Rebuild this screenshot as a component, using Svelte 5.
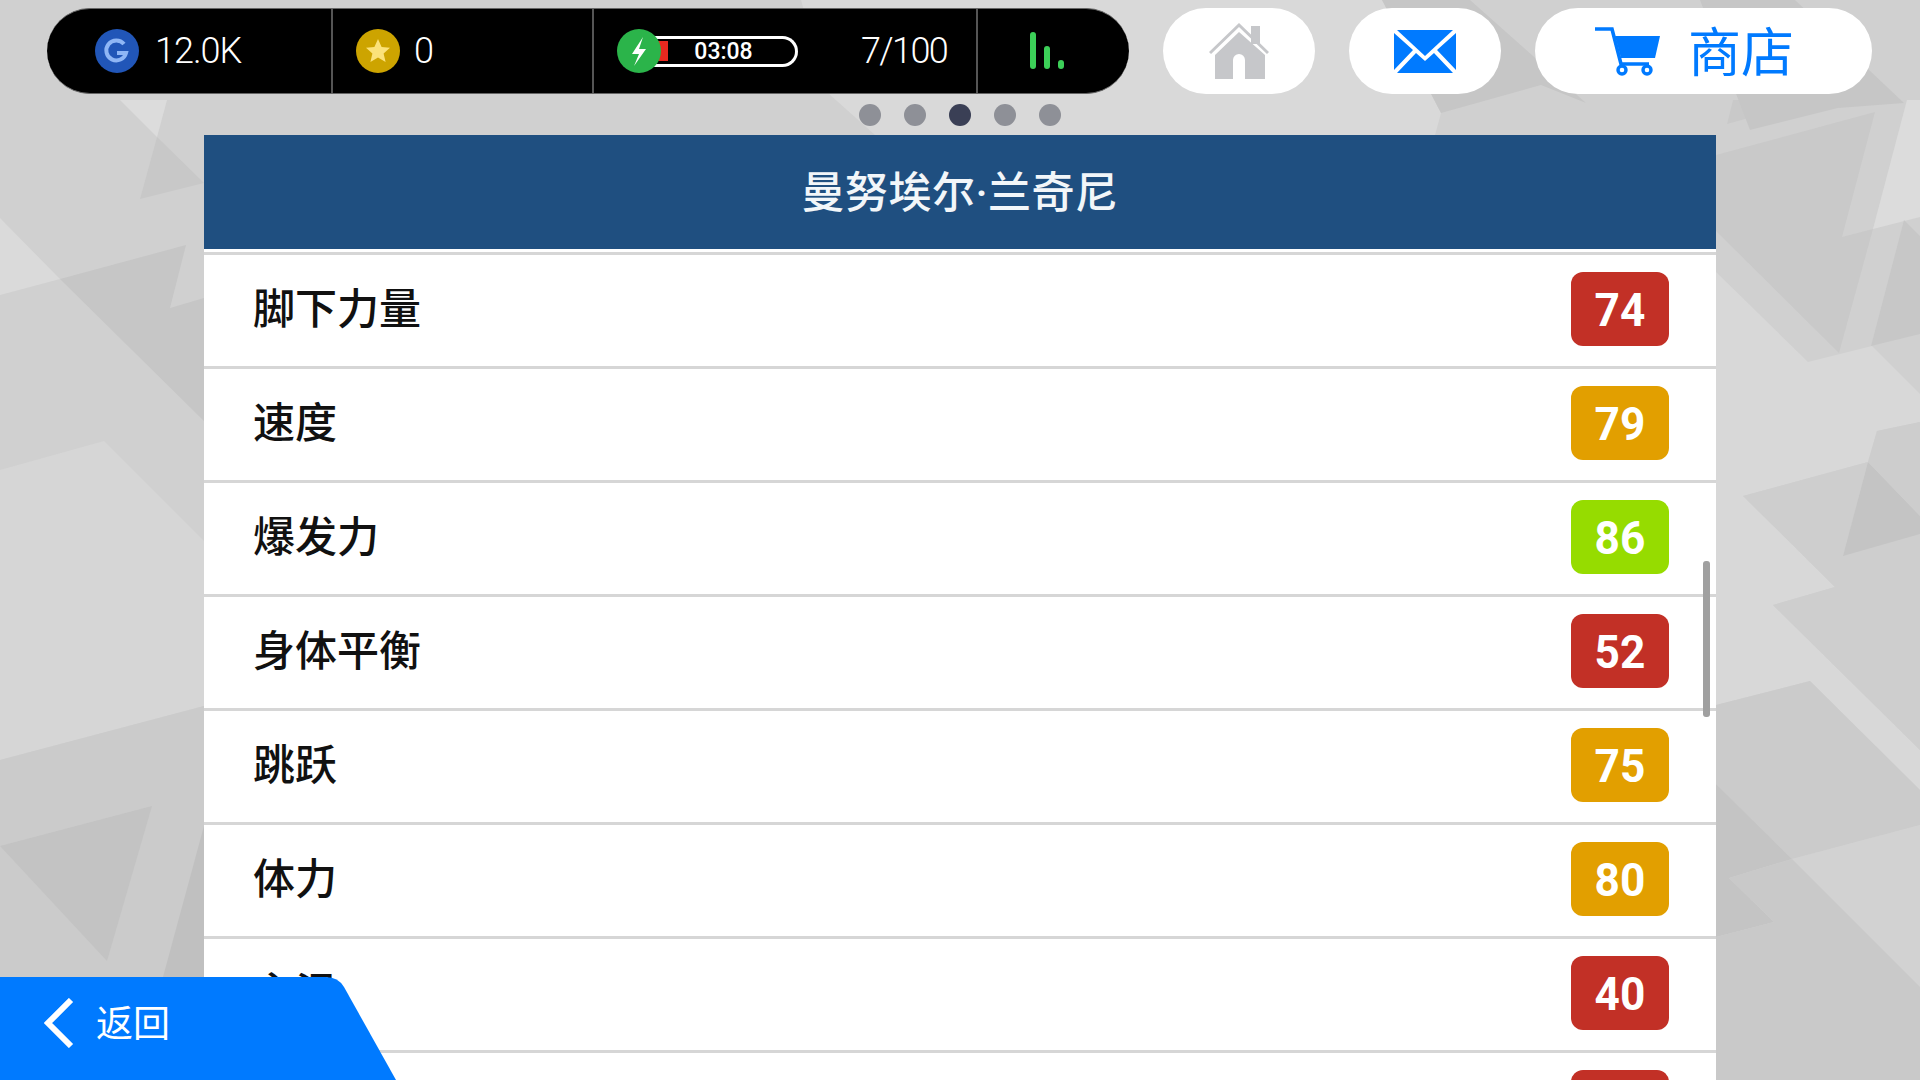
<script>
  // last row only peeks in at the bottom edge, its text is below the screen
  const stats = [
    { name: '脚下力量', value: 74, tone: 'red' },
    { name: '速度', value: 79, tone: 'amber' },
    { name: '爆发力', value: 86, tone: 'green' },
    { name: '身体平衡', value: 52, tone: 'red' },
    { name: '跳跃', value: 75, tone: 'amber' },
    { name: '体力', value: 80, tone: 'amber' },
    { name: '主温', value: 40, tone: 'red' },
    { name: '', value: '', tone: 'red' }
  ];

  const shapes = [
    ['#d9d9d9', '801,0 1382,0 1441,113 1435,135 875,135 828,93'],
    ['#dcdcdc', '120,100 167,100 157,137'],
    ['#c8c8c8', '157,137 204,183 140,199'],
    ['#dadada', '0,218 60,279 0,295'],
    ['#c6c6c6', '60,279 186,245 170,308 204,298 204,421'],
    ['#d6d6d6', '0,470 104,441 204,541 204,706 0,760'],
    ['#cbcbcb', '0,760 204,706 204,1080 0,1080'],
    ['#c3c3c3', '0,846 152,806 107,961'],
    ['#c0c0c0', '204,826 163,977 204,977'],
    ['#c9c9c9', '1716,155 1875,112 1842,237 1873,229 1839,353 1716,231'],
    ['#c9c9c9', '1727,124 1733,100 1813,100'],
    ['#c9c9c9', '1833,107 1840,100 1868,100'],
    ['#dcdcdc', '1907,100 1920,100 1920,217 1873,229'],
    ['#d8d8d8', '1716,272 1808,362 1872,346 1920,394 1920,422 1877,431 1868,462 1743,496 1835,587 1773,605 1920,750 1920,790 1810,681 1716,705'],
    ['#cecece', '1743,496 1868,462 1843,556 1920,534 1920,750 1773,605 1835,587'],
    ['#c4c4c4', '1868,462 1920,516 1920,534 1843,556'],
    ['#cdcdcd', '1877,431 1920,422 1920,516 1868,462'],
    ['#c7c7c7', '1871,346 1904,220 1920,236 1920,334'],
    ['#cbcbcb', '1716,705 1810,681 1920,790 1920,825 1792,859 1716,784'],
    ['#d2d2d2', '1792,859 1920,825 1920,987'],
    ['#c4c4c4', '1716,784 1792,859 1729,878 1774,922 1716,937'],
    ['#c9c9c9', '1716,937 1774,922 1729,878 1792,859 1920,987 1920,1080 1716,1080'],
    ['#c6c6c6', '1382,0 1470,0 1586,103 1541,85 1441,113'],
    ['#c6c6c6', '1700,0 1795,0 1904,103 1838,108 1750,130']
  ];
</script>

<div class="screen">
  <svg class="backdrop" viewBox="0 0 1920 1080" aria-hidden="true">
    <rect width="1920" height="1080" fill="#d0d0d0" />
    {#each shapes as [fill, points]}
      <polygon {fill} {points} />
    {/each}
  </svg>

  <header class="top">
    <div class="status">
      <div class="cell gold">
        <svg class="coin" viewBox="0 0 44 44">
          <circle cx="22" cy="22" r="22" fill="#2156b8" />
          <path d="M29 15a10 10 0 1 0 2 9H22" fill="none" stroke="#8fb6f5" stroke-width="4" />
        </svg>
        <span>12.0K</span>
      </div>
      <div class="cell stars">
        <svg class="coin" viewBox="0 0 44 44">
          <circle cx="22" cy="22" r="22" fill="#cda400" />
          <path d="M22 10l3.6 8 8.4.8-6.4 5.6 2 8.6-7.6-4.6-7.6 4.6 2-8.6-6.4-5.6 8.4-.8z" fill="#fbe27a" />
        </svg>
        <span>0</span>
      </div>
      <div class="cell energy">
        <div class="meter">
          <i class="level"></i>
          <b>03:08</b>
        </div>
        <svg class="coin bolt" viewBox="0 0 44 44">
          <circle cx="22" cy="22" r="22" fill="#2bb44a" />
          <path d="M26 8L15 25h7l-5 12 12-17h-7z" fill="#fff" />
        </svg>
        <span class="count">7/100</span>
      </div>
      <div class="cell signal">
        <i style="height: 37px"></i>
        <i style="height: 23px"></i>
        <i style="height: 9px"></i>
      </div>
    </div>

    <button class="pill round" aria-label="主页">
      <svg viewBox="0 0 60 56" width="60" height="56">
        <path d="M42 3h9v18h-9z" fill="#c6c7ca" />
        <path d="M0 29L30 0l30 29-2 2L30 4 2 31z" fill="#c6c7ca" />
        <path fill-rule="evenodd" d="M6 32L30 9l26 23v24H6zM24 56h12V37a6 6 0 0 0-12 0z" fill="#c6c7ca" />
      </svg>
    </button>
    <button class="pill round" aria-label="邮件">
      <svg viewBox="0 0 62 43" width="62" height="43">
        <path d="M3 0h56L31 26z" fill="#007aff" />
        <path d="M0 3v37l19-20zM62 3v37L43 20z" fill="#007aff" />
        <path d="M3 43l19-20 9 8 9-8 19 20z" fill="#007aff" />
      </svg>
    </button>
    <button class="pill shop">
      <svg viewBox="0 0 65 49" width="65" height="49">
        <path d="M0 2h17l9 35h28" fill="none" stroke="#007aff" stroke-width="3.6" />
        <path d="M20 9h45l-5 22H26z" fill="#007aff" />
        <circle cx="27" cy="43" r="4" fill="#fff" stroke="#007aff" stroke-width="3.4" />
        <circle cx="52" cy="43" r="4" fill="#fff" stroke="#007aff" stroke-width="3.4" />
      </svg>
      <span>商店</span>
    </button>
  </header>

  <div class="dots">
    {#each [0, 1, 2, 3, 4] as i}
      <span class:active={i === 2}></span>
    {/each}
  </div>

  <main class="panel">
    <h1>曼努埃尔·兰奇尼</h1>
    <div class="rows">
      {#each stats as stat}
        <div class="row">
          <span class="name">{stat.name}</span>
          <span class="badge {stat.tone}"><em>{stat.value}</em></span>
        </div>
      {/each}
    </div>
    <div class="thumb"></div>
  </main>

  <button class="back">
    <svg viewBox="0 0 30 50" width="30" height="50">
      <path d="M27 2L4 25l23 23" fill="none" stroke="#fff" stroke-width="6" />
    </svg>
    <span>返回</span>
  </button>
</div>

<style>
  :global(body) {
    margin: 0;
    overflow: hidden;
  }
  .screen {
    position: relative;
    width: 1920px;
    height: 1080px;
    overflow: hidden;
    font-family: "Noto Sans CJK SC", "Noto Sans", sans-serif;
  }
  .backdrop {
    position: absolute;
    inset: 0;
    width: 1920px;
    height: 1080px;
  }
  .top {
    position: relative;
    display: flex;
    gap: 34px;
    height: 86px;
    padding: 8px 47px 0 47px;
  }
  .status {
    display: flex;
    width: 1082px;
    height: 86px;
    box-sizing: border-box;
    background: #000;
    border: 1px solid #666;
    border-width: 1px 0;
    border-radius: 43px;
    color: #fff;
    font-family: Roboto, sans-serif;
    font-weight: 300;
    font-size: 36px;
    letter-spacing: -1px;
  }
  .cell {
    display: flex;
    align-items: center;
    box-sizing: border-box;
    border-right: 2px solid #555;
  }
  .gold {
    width: 286px;
    padding-left: 48px;
    gap: 16px;
  }
  .stars {
    width: 261px;
    padding-left: 23px;
    gap: 14px;
  }
  .energy {
    position: relative;
    width: 384px;
    padding-left: 23px;
  }
  .coin {
    width: 44px;
    height: 44px;
    flex: none;
  }
  .bolt {
    position: absolute;
    left: 23px;
    top: 20px;
  }
  .meter {
    position: relative;
    display: flex;
    align-items: center;
    justify-content: center;
    width: 160px;
    height: 31px;
    margin-left: 21px;
    padding-left: 14px;
    box-sizing: border-box;
    border: 3px solid #fff;
    border-left: 0;
    border-radius: 0 16px 16px 0;
    font-size: 23px;
    letter-spacing: 0;
  }
  .meter b {
    font-weight: 500;
  }
  .level {
    position: absolute;
    left: 20px;
    top: 2px;
    width: 10px;
    height: 20px;
    background: #e8291f;
  }
  .count {
    margin-left: 63px;
    letter-spacing: -1.6px;
  }
  .signal {
    flex: 1;
    align-items: flex-end;
    gap: 8px;
    padding: 0 0 24px 52px;
    border-right: 0;
  }
  .signal i {
    width: 6px;
    background: #3ccf58;
    border-radius: 3px;
  }
  .pill {
    display: flex;
    align-items: center;
    justify-content: center;
    height: 86px;
    padding: 0;
    border: 0;
    background: #fff;
    border-radius: 43px;
    font-family: inherit;
  }
  .round {
    width: 152px;
  }
  .shop {
    width: 337px;
    gap: 28px;
    padding-right: 18px;
    box-sizing: border-box;
    color: #007aff;
    font-size: 53px;
  }
  .shop span {
    line-height: 60px;
    margin-bottom: 4px;
  }
  .dots {
    position: relative;
    display: flex;
    justify-content: center;
    gap: 23px;
    margin-top: 10px;
    height: 22px;
  }
  .dots span {
    width: 22px;
    height: 22px;
    border-radius: 50%;
    background: #8e9097;
  }
  .dots .active {
    background: #3a3f55;
  }
  .panel {
    position: relative;
    width: 1512px;
    height: 945px;
    margin: 9px 0 0 204px;
    background: #fff;
    overflow: hidden;
  }
  h1 {
    display: flex;
    align-items: center;
    justify-content: center;
    height: 114px;
    box-sizing: border-box;
    padding-bottom: 6px;
    margin: 0;
    background: #1f4f80;
    color: #f2f6f9;
    font-family: Roboto, "Noto Sans CJK SC", sans-serif;
    font-size: 43px;
    font-weight: 500;
    letter-spacing: 0.5px;
  }
  .rows {
    padding-top: 3px;
  }
  .row {
    display: flex;
    align-items: center;
    justify-content: space-between;
    height: 108px;
    padding: 0 47px 3px 49px;
    border-top: 3px solid #d6d6d6;
  }
  .name {
    font-size: 42px;
    font-weight: 500;
    color: #111;
    line-height: 1;
    margin-bottom: 6px;
  }
  .badge {
    display: flex;
    align-items: center;
    justify-content: center;
    width: 98px;
    height: 74px;
    border-radius: 12px;
    color: #fff;
    font-family: Roboto, sans-serif;
    font-weight: 700;
    font-size: 47px;
  }
  .badge em {
    font-style: normal;
    transform: scaleX(0.94);
  }
  .red {
    background: #c23026;
  }
  .amber {
    background: #e29f00;
  }
  .green {
    background: #96dc00;
  }
  .thumb {
    position: absolute;
    left: 1499px;
    top: 426px;
    width: 7px;
    height: 156px;
    border-radius: 3px;
    background: #a0a0a0;
  }
  .back {
    position: absolute;
    left: 0;
    bottom: 0;
    display: flex;
    align-items: center;
    gap: 22px;
    width: 396px;
    height: 103px;
    padding: 0 0 16px 44px;
    box-sizing: border-box;
    border: 0;
    background: #007aff;
    clip-path: path("M0 0H326Q338 0 344 10L396 103H0Z");
    color: #fff;
    font-family: inherit;
    font-size: 37px;
  }
  .back svg {
    margin-top: 4px;
  }
</style>
